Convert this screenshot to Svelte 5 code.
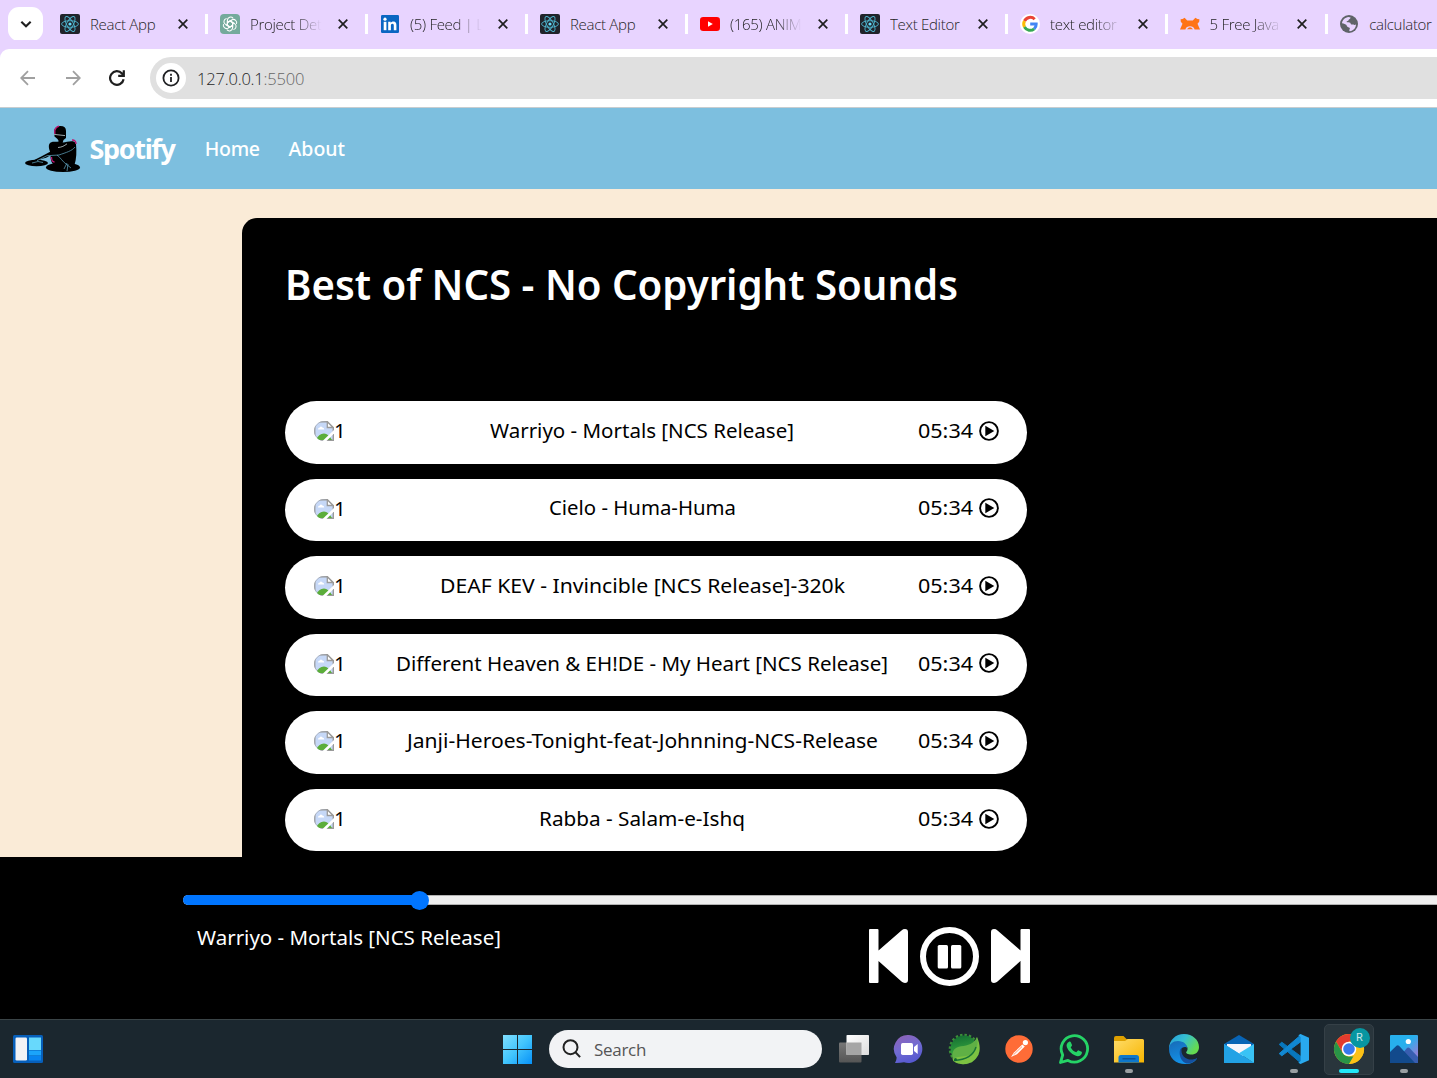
<script>
  const tabs = [
    { icon: 'react', title: 'React App' },
    { icon: 'gpt', title: 'Project Det' },
    { icon: 'linkedin', title: '(5) Feed | L' },
    { icon: 'react', title: 'React App' },
    { icon: 'youtube', title: '(165) ANIM' },
    { icon: 'react', title: 'Text Editor' },
    { icon: 'google', title: 'text editor' },
    { icon: 'bear', title: '5 Free Java' },
    { icon: 'globe', title: 'calculator' }
  ];
  const faded = [1, 2, 4, 6, 7];
  const songs = [
    { name: 'Warriyo - Mortals [NCS Release]', width: 304 },
    { name: 'Cielo - Huma-Huma', width: 187 },
    { name: 'DEAF KEV - Invincible [NCS Release]-320k', width: 405 },
    { name: 'Different Heaven & EH!DE - My Heart [NCS Release]', width: 492 },
    { name: 'Janji-Heroes-Tonight-feat-Johnning-NCS-Release', width: 471 },
    { name: 'Rabba - Salam-e-Ishq', width: 206 }
  ];
  const apps = ['taskview', 'chat', 'spring', 'postman', 'whatsapp', 'files', 'edge', 'mail', 'vscode', 'chrome', 'photos'];
  const running = ['files', 'vscode', 'photos'];
  const played = 236;
</script>

{#snippet fitted(text, width, size)}
  <svg class="fitted" style:width="{width}px" height={size * 1.4} aria-label={text}>
    <text x="0" y={size * 1.06} font-size={size} textLength={width} lengthAdjust="spacingAndGlyphs">{text}</text>
  </svg>
{/snippet}

{#snippet favicon(name)}
  <svg class="favicon" viewBox="0 0 20 20">
    {#if name === 'react'}
      <rect width="20" height="20" rx="2" fill="#20232a" />
      <g fill="none" stroke="#4fb6cf" stroke-width="0.9">
        <ellipse cx="10" cy="10" rx="8.4" ry="3.3" />
        <ellipse cx="10" cy="10" rx="8.4" ry="3.3" transform="rotate(60 10 10)" />
        <ellipse cx="10" cy="10" rx="8.4" ry="3.3" transform="rotate(120 10 10)" />
      </g>
      <circle cx="10" cy="10" r="1.6" fill="#61dafb" />
    {:else if name === 'gpt'}
      <path d="M4 0h12a4 4 0 0 1 4 4v16H4a4 4 0 0 1-4-4V4a4 4 0 0 1 4-4Z" fill="#74aa9c" />
      <g fill="none" stroke="#fff" stroke-width="1.05" stroke-linejoin="round">
        {#each [0, 60, 120, 180, 240, 300] as a}
          <path d="M7.4 11.5V6.2a3.2 3.2 0 0 1 5.7-1.9M7.4 8.5l2.6-1.5 4.4 2.5" transform="rotate({a} 10 10)" />
        {/each}
      </g>
    {:else if name === 'linkedin'}
      <rect x="1" y="1" width="18" height="18" rx="1.2" fill="#0a66c2" />
      <g fill="#fff"><circle cx="5" cy="5.2" r="1.6" /><rect x="3.7" y="7.8" width="2.7" height="8.4" />
      <path d="M8.2 7.8h2.5V9c.5-.8 1.4-1.4 2.7-1.4 2.5 0 3 1.7 3 3.9v4.7h-2.6v-4.3c0-1 0-2.1-1.4-2.1s-1.5 1-1.5 2.1v4.3H8.2Z" /></g>
    {:else if name === 'youtube'}
      <rect y="3" width="20" height="14" rx="3.2" fill="#f00" />
      <path d="M8 7.2v5.6l4.8-2.8Z" fill="#fff" />
    {:else if name === 'google'}
      <circle cx="10" cy="10" r="10" fill="#fff" />
      <g fill="none" stroke-width="3">
        <path d="M14.7 5.2A6.3 6.3 0 0 0 4.5 7" stroke="#ea4335" />
        <path d="M4.5 7a6.3 6.3 0 0 0 0 6" stroke="#fbbc04" />
        <path d="M4.5 13a6.3 6.3 0 0 0 9.7 1.8" stroke="#34a853" />
        <path d="M14.2 14.8A6.2 6.2 0 0 0 16.2 10H10.2" stroke="#4285f4" />
      </g>
    {:else if name === 'bear'}
      <path d="M.6 5.2 2.6 5l2-1.2 2.6 2.7h5.6l2.6-2.7 2 1.2 2 .2-.2 2.6-1.7 2L20 15.6h-5.4c-.6-2.2-2.2-3.3-4.6-3.3s-4 1.1-4.6 3.3H0l2.5-5.8-1.7-2Z" fill="#ff7416" />
      <path d="M7 15.2q3-4 6 0Z" fill="#ff7416" />
    {:else}
      <circle cx="10" cy="10" r="9" fill="#5f6368" />
      <path d="M3 9.3C3.3 6 6 3.3 9.6 3l2 .4c-.2 1.6-1.8 1.4-2 2.6-.1 1.3-1.8.9-2.1 1.9.9.6 2.9 0 3.7.9.5.7.4 1.6 1.3 1.7.8.2 1.6-.2 2.5.2.8.4 1.5.2 2-.5.1 3.6-2.7 6.5-6.2 7.1-.5-.5-.7-1.2-.3-1.9.7-.9.4-1.6-.6-1.9-1.6-.5-2.3-1.2-2.4-2.4C6.5 10.300 5 9.500 3 9.300Z" fill="#e8d4ff" />
    {/if}
  </svg>
{/snippet}

{#snippet appIcon(name)}
  <svg class="app-icon" viewBox="0 0 32 32">
    {#if name === 'taskview'}
      <defs><linearGradient id="tv1" x2="0" y2="1"><stop stop-color="#777" /><stop offset="1" stop-color="#555" /></linearGradient>
      <linearGradient id="tv2" x2="1" y2="1"><stop stop-color="#fff" /><stop offset="1" stop-color="#ddd" /></linearGradient></defs>
      <rect x="1" y="9.5" width="22.5" height="20" rx="1" fill="url(#tv1)" />
      <rect x="8.5" y="2" width="22.5" height="20" rx=".8" fill="url(#tv2)" />
      <rect x="8.5" y="9.5" width="15" height="12.5" fill="#a6a6a6" />
    {:else if name === 'chat'}
      <defs><linearGradient id="ch" x1=".2" x2=".6" y2="1"><stop stop-color="#8d62b8" /><stop offset=".5" stop-color="#716bd2" /><stop offset="1" stop-color="#5558d0" /></linearGradient></defs>
      <path d="M16 2a14 14 0 1 1-5 27.3c-2.700.6-5.800.8-9 .7 1.100-2 1.700-4 1.600-5.800A14 14 0 0 1 16 2Z" fill="url(#ch)" />
      <rect x="8" y="10" width="12" height="12" rx="1.7" fill="#fff" /><path d="m21 14 3.7-3v10L21 18Z" fill="#fff" />
    {:else if name === 'spring'}
      <defs><linearGradient id="sp" x2=".2" y2="1"><stop stop-color="#116b32" /><stop offset=".6" stop-color="#2f9a3c" /><stop offset="1" stop-color="#77bc41" /></linearGradient></defs>
      <circle cx="16" cy="16" r="14" fill="none" stroke="#3c8f38" stroke-width="2.6" stroke-dasharray="2.4 2" />
      <circle cx="16" cy="16" r="13.4" fill="url(#sp)" />
      <path d="M29 4C33 13 33 22 26 27.500 20 32.500 11 32 6 28.500 2.500 25.500 6 17 13 16 21 15 27 12 29 4Z" fill="#7dc242" />
      <path d="M29 4C31 13 28 20 20 22.500 14 24 9 23 5 26 3 18 7 14 13 13.300 20 12.500 26 11 29 4Z" fill="#5fb045" />
      <path d="M6 27.500C15 27 25 24.500 28 14" fill="none" stroke="#187437" stroke-width="1.4" />
      <circle cx="7.500" cy="26.500" r="1.500" fill="#126a31" />
    {:else if name === 'postman'}
      <circle cx="16" cy="16" r="13.7" fill="#ff6c37" />
      <path d="m8 24 3-4.500 8.300-8 2.500 1.900-7.800 7.900Z" fill="#fff" /><circle cx="22.400" cy="9.600" r="2.600" fill="#fff" />
      <path d="m10.500 21.800 8.500-8.200" stroke="#ff6c37" stroke-width=".7" />
    {:else if name === 'whatsapp'}
      <path d="M2.500 29.500 4.700 22A13.200 13.200 0 1 1 10 27.400Z" fill="none" stroke="#25d366" stroke-width="2.800" stroke-linejoin="round" />
      <path d="M11.1 8.8c.6-.4 1.4-.3 1.700.4l1.200 2.800c.3.700-.8 1.700-1.300 2.200 1.200 2.500 3.100 4.200 5.700 5.100.8-.7 1.400-2.200 2.300-1.900l2.900 1.400c1 .5-.1 3.100-1.400 3.800-1.500.8-3.200.7-5-.1-4.200-1.700-6.700-4.600-8.200-7.900-1-2.200-.2-4.900 2.100-5.800Z" fill="#25d366" />
    {:else if name === 'files'}
      <defs><linearGradient id="fo" x2="1" y2="1"><stop stop-color="#ffdc69" /><stop offset="1" stop-color="#f7b500" /></linearGradient></defs>
      <path d="M1 5a2 2 0 0 1 2-2h7.500l3 3H29v9H1Z" fill="#dea000" />
      <path d="M1 8h11l3-2h14.500A1.500 1.500 0 0 1 31 7.500v22H1Z" fill="url(#fo)" />
      <path d="M5.500 29.500v-5a2.500 2.500 0 0 1 2.500-2.500h15.500a2.500 2.500 0 0 1 2.500 2.500v5Z" fill="#0d78cc" /><path d="M9.500 25.800h13" stroke="#0a4d91" stroke-width="1.3" />
    {:else if name === 'edge'}
      <defs><linearGradient id="e1" x2="1" y2=".5"><stop stop-color="#249bdc" /><stop offset=".5" stop-color="#35bfd2" /><stop offset="1" stop-color="#65db50" /></linearGradient>
      <linearGradient id="e2" x2=".5" y2="1"><stop stop-color="#1769b5" /><stop offset="1" stop-color="#1395ed" /></linearGradient></defs>
      <path d="M1 16C1 7 7.700 1 16 1c8.700 0 15 6.100 15 13 0 5-3.400 7.500-7.500 7.500-3.800 0-5.900-1.300-5.200-2.500 2.900-3.500.6-7.800-4.200-8.600C8 9.400 3 11.500 1 16Z" fill="url(#e1)" />
      <path d="M1 16c0-4.900 4-8 9-8 5.800 0 9.200 3.800 9.200 7-1.500-2.100-5.800-1-6.700 2-1.400 5 2.700 10.500 8.900 10.500 3.500 0 6-1.200 7.700-2.300C27 29.300 22.300 31.200 17 31 8 31 1 25 1 16Z" fill="url(#e2)" />
      <path d="M13.800 14.500c-5 4.300-.6 16.500 6.500 16.100 3.800-.6 7.300-2.800 8.800-5.400-7.200 3.700-17.700-.1-15.300-10.700Z" fill="#15509f" />
    {:else if name === 'mail'}
      <path d="M1 11 16 2l15 9v7H1Z" fill="#0864b5" /><path d="M4 11h24v9L16 25 4 18Z" fill="#f6f5fb" />
      <path d="M1 11v19h30Z" fill="#2caee9" /><path d="M31 11v19L16 20.300Z" fill="#39c3f5" /><path d="M1 30V11l30 19Z" fill="#22a2e5" />
    {:else if name === 'vscode'}
      <path d="M1.200 11.400 3.800 9.200 23 23.500v6.700Z" fill="#0877bd" stroke="#0877bd" stroke-width="1" stroke-linejoin="round" />
      <path d="m1.200 20.600 2.600 2.200L23 8.500V1.800Z" fill="#1188d2" stroke="#1188d2" stroke-width="1" stroke-linejoin="round" />
      <path d="M22.500 1 31 4.800v22.400L22.500 31l-2.200-1.200 2.300-1.700V4l-2.300-1.700Z" fill="#29a9ee" />
    {:else if name === 'chrome'}
      <circle cx="16" cy="16" r="15" fill="#fbc116" />
      <path d="M3 8.500A15 15 0 0 1 29 8.500H16L9.500 19.800Z" fill="#e33b2e" />
      <path d="M3 8.500 9.500 19.800A7.500 7.500 0 0 0 16 23.500h6.500L16 31A15 15 0 0 1 3 8.500Z" fill="#299447" />
      <path d="M22.500 19.800 16 31A15 15 0 0 0 29 8.500H16Z" fill="#fbc116" />
      <circle cx="16" cy="16" r="7.300" fill="#fff" /><circle cx="16" cy="16" r="5.800" fill="#3979ed" />
    {:else}
      <defs><linearGradient id="ph" x2="1" y2="1"><stop offset=".45" stop-color="#27b0ed" /><stop offset=".8" stop-color="#8883d8" /></linearGradient></defs>
      <rect x="2" y="2" width="28" height="28" rx="1" fill="url(#ph)" />
      <path d="m14 21 5-6c.8-.8 1.700-.8 2.500 0L30 24v6H14Z" fill="#385eb0" />
      <path d="m2 19 6.500-6.200c.8-.8 1.700-.8 2.500 0L27 30H2Z" fill="#124a8c" /><circle cx="20.300" cy="8.500" r="2.600" fill="#fff" />
    {/if}
  </svg>
{/snippet}

<div class="screen">
  <header class="tabstrip">
    <button class="tab-search" aria-label="Search tabs"><svg viewBox="0 0 12 12"><path d="m2 4 4 4 4-4" /></svg></button>
    {#each tabs as tab, i}
      <div class="tab">
        {@render favicon(tab.icon)}
        <span class="tab-title" class:fade={faded.includes(i)}>{tab.title}</span>
        <svg class="close" viewBox="0 0 10 10"><path d="m.7.7 8.600 8.600M9.300.7.7 9.300" /></svg>
      </div>
    {/each}
  </header>

  <div class="toolbar">
    <svg class="nav-icon muted" viewBox="0 0 16 16"><path d="M15 8H1.500M8 1.200 1.200 8 8 14.800" /></svg>
    <svg class="nav-icon muted" viewBox="0 0 16 16"><path d="M1 8h13.500M8 1.200 14.800 8 8 14.800" /></svg>
    <svg class="nav-icon" viewBox="0 0 16 16"><path class="reload" d="M14.600 9.200A6.800 6.800 0 1 1 13 3.500L14.700 5.200M14.800.3v5.600H9.200" /></svg>
    <div class="address">
      <span class="info"><svg viewBox="0 0 18 18"><circle cx="9" cy="9" r="7.600" /><path d="M9 8v5M9 4.800v2" /></svg></span>
      <span class="url">127.0.0.1<span>:5500</span></span>
    </div>
  </div>

  <nav>
    <svg class="logo" viewBox="0 0 56 48">
      <ellipse cx="11.500" cy="38" rx="11.500" ry="3.200" />
      <ellipse cx="38" cy="42.400" rx="17" ry="4.700" />
      <path d="M29.200 5.500Q30 1 35.500 1T41 6v7l-2.500 2-.8 2.500c4 .2 11-3.500 13.300 1.500.7 7.500.6 15-1.600 21.300-5 3.800-15.500 3-20.500-.4-2.700-2-3.300-5.700-3.400-9.200-2.400.5-4 2.500-7.500 2.900l-9.300 3.700-1-1.500 9-4.600 8.400-4.400c-1.300-3-2.200-7.800.6-9.300 3-1.400 6.400 0 8.100-1.300L32.500 14l-3-2.500Z" />
      <path d="M29.800 9V5.200Q31 1.800 34 1.200M47 15q3.700-.3 4.100 4M26.500 32q0 5 3 5" fill="none" stroke="#bd1670" stroke-width="1.300" />
      <g fill="none" stroke="#dceef4" stroke-width=".7"><path d="M29.200 9.400 40 10.600M33 22.500c4-.3 6-1.500 9-3.700" /><path stroke="#64acc9" d="M50 22c-3 4-9 5.500-16 8l-12 .7-10 5M32 30c4 3 5 6 9 9l5 4M42 38l-3 6m4-5-1 7M7 38l6-1.500 5 1" /></g>
    </svg>
    <strong>Spotify</strong>
    <a href="#home">Home</a>
    <a href="#about">About</a>
  </nav>

  <main>
    <section>
      <h1>
        {@render fitted('Best of NCS - No Copyright Sounds', 673, 41)}
      </h1>
      <ul>
        {#each songs as song}
          <li>
            <span class="cover">
              <svg viewBox="0 0 20 20">
                <defs><clipPath id="cover"><path d="M10 0h4l6 6v14H10C4.500 20 0 15.500 0 10S4.500 0 10 0Z" /></clipPath></defs>
                <g clip-path="url(#cover)">
                  <path d="M.7.7h12.800l5.800 5.800v12.800H.7Z" fill="#c6d8f7" stroke="#9a9a9a" stroke-width="1.400" />
                  <circle cx="10" cy="10" r="9.700" fill="none" stroke="#a5aab3" stroke-width=".8" stroke-dasharray="34 27" stroke-dashoffset="-13" />
                  <path d="M4 8.500q0-2 1.800-2 1-2 2.600 0 1.800 0 1.800 2Z" fill="#fff" />
                  <path d="M2 19q2.500-6.500 8-6.500 4.500 0 8 6.500Z" fill="#5bad3a" />
                  <path d="M12 20.500 20.500 12V8.500L8 20.500Z" fill="#fff" />
                </g>
                <path d="M13.300.8v5.700h5.800Z" fill="#fff" stroke="#9a9a9a" stroke-width="1.300" />
              </svg><span>1</span>
            </span>
            {@render fitted(song.name, song.width, 20.5)}
            <span class="time">{@render fitted('05:34', 55, 20.5)}<svg class="play" viewBox="0 0 20 20"><circle cx="10" cy="10" r="8.900" /><path d="M6.300 4.800 15.300 10l-9 5.300Z" /></svg></span>
          </li>
        {/each}
      </ul>
    </section>
  </main>

  <footer class="player">
    <div class="track"><div class="fill" style:width="{played}px"></div><i></i></div>
    <div class="deck">
      <div class="now">{@render fitted('Warriyo - Mortals [NCS Release]', 304, 20.5)}</div>
      <div class="controls">
        <svg class="step" viewBox="0 0 39 54"><path d="M1 0h7.500q1 0 1 1v20.500L32.500 1.400Q34 0 36 0q3 0 3 3v48q0 3-3 3-2 0-3.500-1.400L9.500 32v21q0 1-1 1H1q-1 0-1-1V1q0-1 1-1Z" /></svg>
        <svg class="pause" viewBox="0 0 59 59"><circle cx="29.500" cy="29.500" r="26.500" /><rect x="17.700" y="18" width="10.300" height="23.400" rx="1.500" /><rect x="31" y="18" width="10.300" height="23.400" rx="1.500" /></svg>
        <svg class="step next" viewBox="0 0 39 54"><path d="M1 0h7.500q1 0 1 1v20.500L32.500 1.400Q34 0 36 0q3 0 3 3v48q0 3-3 3-2 0-3.500-1.400L9.500 32v21q0 1-1 1H1q-1 0-1-1V1q0-1 1-1Z" /></svg>
      </div>
    </div>
  </footer>

  <div class="taskbar">
    <svg class="widgets" viewBox="0 0 30 28"><rect width="30" height="28" rx="1.500" fill="#075fba" /><rect x="2.500" y="2.500" width="11.500" height="23" rx="1.300" fill="#f2f2f5" /><path d="M16 2.500h12V15H16Z" fill="#68d9fc" /><path d="M16 15.500h12v5H16Z" fill="#1ba4fa" /><path d="M16 21h12v4.500H16Z" fill="#0884ef" /></svg>
    <svg class="start" viewBox="0 0 29 29"><defs><linearGradient id="win" gradientUnits="userSpaceOnUse" x2="29" y2="29"><stop stop-color="#80dfff" /><stop offset=".5" stop-color="#42c5fc" /><stop offset="1" stop-color="#0791f8" /></linearGradient></defs><path d="M0 0h14v14H0ZM15 0h14v14H15ZM0 15h14v14H0ZM15 15h14v14H15Z" fill="url(#win)" /></svg>
    <div class="search"><svg viewBox="0 0 20 20"><circle cx="8.500" cy="8.200" r="7" /><path d="m13.700 13.500 4.400 4.600" /></svg><span>Search</span></div>
    <div class="apps">
      {#each apps as app}
        <div class="app" class:active={app === 'chrome'} class:running={running.includes(app)}>
          {@render appIcon(app)}
          {#if app === 'chrome'}<b>R</b>{/if}
        </div>
      {/each}
    </div>
  </div>
</div>

<style>
  :global(body) { margin: 0; }
  .screen { width: 1437px; height: 1078px; overflow: hidden; display: flex; flex-direction: column; background: #faebd7; font-family: 'Noto Sans', 'Open Sans', sans-serif; }
  .screen *, .screen { box-sizing: border-box; }
  svg { display: block; flex: none; }

  .tabstrip { height: 49px; flex: none; display: flex; background: #e8d4ff; overflow: hidden; font: 15px 'Open Sans', sans-serif; color: #1f1f1f; }
  .tab-search { flex: none; width: 35px; height: 34px; margin: 7px 5px 0 8px; padding: 0; border: 0; border-radius: 11px; background: #fff; display: grid; place-items: center; }
  .tab-search svg { width: 14px; fill: none; stroke: #1f1f1f; stroke-width: 1.8; }
  .tab { flex: none; width: 160px; height: 47px; padding-left: 12px; display: flex; align-items: center; background: linear-gradient(#fff, #fff) 157px 14px / 3px 20px no-repeat; }
  .tab:nth-last-child(-n + 2) { margin-left: -.4px; }
  .favicon { width: 20px; height: 20px; margin-top: 1px; }
  .tab-title { width: 74px; margin: 1px 0 0 10px; overflow: hidden; white-space: nowrap; font-weight: 350; letter-spacing: -.3px; }
  .fade { mask-image: linear-gradient(90deg, #000 60%, transparent 97%); }
  .close { width: 10px; height: 10px; margin: 1px 0 0 13.500px; stroke: #1f1f1f; stroke-width: 1.7; }

  .toolbar { height: 58px; flex: none; display: flex; align-items: center; padding-left: 20px; background: #fff; border-radius: 9px 0 0 0; box-shadow: -9px -9px 0 #e8d4ff; }
  .nav-icon { width: 16px; height: 16px; margin-right: 28.7px; fill: none; stroke: #1f1f1f; stroke-width: 1.8; }
  .muted { stroke: #a0a0a0; }
  .reload { stroke-width: 2.2; }
  .address { flex: 1; height: 42px; border-radius: 21px 0 0 21px; background: #e0e0e0; display: flex; align-items: center; padding-left: 6px; margin-left: -4px; }
  .info { width: 30px; height: 30px; border-radius: 50%; background: #fff; display: grid; place-items: center; }
  .info svg { width: 18px; fill: none; stroke: #202124; stroke-width: 1.8; }
  .url { margin: 1px 0 0 11px; font: 350 16.5px 'Open Sans', sans-serif; letter-spacing: -.2px; color: #1f1f1f; }
  .url span { color: #666; }

  nav { height: 82px; flex: none; display: flex; align-items: center; padding: 0 0 0 24.5px; border-top: 1px solid #c7cdd0; background: #7dbfdf; color: #fff; }
  .logo { width: 56px; height: 48px; }
  nav strong { width: 86px; margin-left: 9px; font-size: 27px; letter-spacing: -1.35px; font-weight: 700; }
  nav a { width: 54.5px; margin-left: 29.3px; color: #fff; text-decoration: none; font-size: 19.5px; white-space: nowrap; letter-spacing: -.3px; font-weight: 500; }
  nav a + a { letter-spacing: 0; }

  main { flex: 1; min-height: 0; padding: 29px 0 0 242px; overflow: hidden; }
  section { height: 700px; padding: 38.5px 43px 0; border-radius: 15px 0 0 0; background: #000; }
  h1 { margin: 0; height: 144.5px; fill: #fff; font-weight: 600; }
  .fitted { overflow: visible; }
  ul { margin: 0; padding: 0; list-style: none; display: flex; flex-direction: column; gap: 15px; }
  li { width: 742px; height: 62.55px; padding: 0 28.5px 4px 29px; border-radius: 32px; background: #fff; display: flex; align-items: center; justify-content: space-between; }
  .cover { width: 54px; display: flex; align-items: center; font-size: 20.5px; color: #000; }
  .cover svg { width: 20px; margin-top: 2px; }
  li .cover + .fitted { margin: 0 -60px 0 -61px; }
  .time { display: flex; align-items: center; gap: 6px; }
  .play { width: 20px; height: 20px; margin-top: 1px; }
  .play circle { fill: none; stroke: #000; stroke-width: 1.9; }

  .player { height: 162px; flex: none; padding: 38px 0 0 183px; background: #000; overflow: hidden; }
  .track { height: 10px; display: flex; align-items: center; border: solid #b2b2b2; border-width: 1px 0 1px 1px; border-radius: 5px 0 0 5px; background: #efefef; }
  .fill { height: 10px; border-radius: 5px 0 0 5px; background: #0075ff; margin-left: -1px; }
  .track i { width: 19px; height: 19px; border-radius: 50%; background: #0075ff; margin-left: -9px; }
  .deck { display: flex; }
  .now { width: 686px; padding: 18px 0 0 14px; fill: #fff; }
  .controls { display: flex; align-items: center; gap: 12px; padding-top: 22px; fill: #fff; }
  .step { width: 39px; height: 54px; margin-top: -1px; }
  .next { transform: scaleX(-1); }
  .pause { width: 59px; height: 59px; }
  .pause circle { fill: none; stroke: #fff; stroke-width: 6; }

  .taskbar { height: 59px; flex: none; display: flex; align-items: center; background: #1b272f; border-top: 1px solid #3a4447; padding-left: 13px; }
  .widgets { width: 30px; height: 28px; }
  .start { width: 29px; height: 29px; margin-left: 460px; }
  .search { width: 273px; height: 38px; margin-left: 17px; padding-left: 13px; border-radius: 19px; background: #f2f3f5; display: flex; align-items: center; gap: 12px; font: 17px 'Open Sans', sans-serif; letter-spacing: -.3px; color: #555; }
  .search svg { width: 20px; height: 20px; fill: none; stroke: #222; stroke-width: 2; }
  .apps { display: flex; margin-left: 4.5px; }
  .app { position: relative; width: 50px; height: 51px; margin: 0 3px 0 2px; display: grid; place-items: center; border-radius: 5px; }
  .app-icon { width: 32px; height: 32px; }
  .running::after, .active::after { content: ''; position: absolute; left: 50%; bottom: 2px; width: 8px; height: 4px; transform: translateX(-50%); border-radius: 2px; background: #9a9fa2; }
  .active { background: #29353c; border: 1px solid #354047; }
  .active::after { width: 20px; bottom: 1px; background: #22e7f8; }
  .app b { position: absolute; left: 25px; top: 3px; width: 20px; height: 20px; border-radius: 50%; background: #0796a1; color: #c8e7e9; font: 11px/20px Roboto, sans-serif; text-align: center; }
</style>
